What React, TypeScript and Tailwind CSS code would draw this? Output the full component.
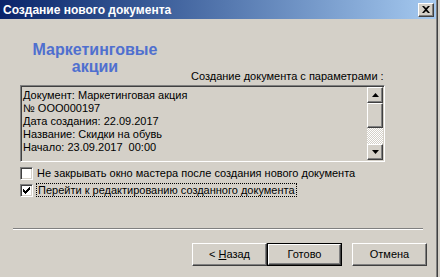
import React from "react";

const font = { fontFamily: '"Liberation Sans", Arial, sans-serif' };

function Raised({ className = "", children }: { className?: string; children?: React.ReactNode }) {
  return (
    <div
      className={
        "bg-[#d4d0c8] border border-t-white border-l-white border-b-[#404040] border-r-[#404040] shadow-[inset_-1px_-1px_0_#808080] " +
        className
      }
    >
      {children}
    </div>
  );
}

function Checkbox({ checked }: { checked?: boolean }) {
  return (
    <div className="w-[13px] h-[13px] bg-white border border-t-[#808080] border-l-[#808080] border-b-white border-r-white shadow-[inset_1px_1px_0_#404040,inset_-1px_-1px_0_#d4d0c8] flex items-center justify-center shrink-0">
      {checked && (
        <svg width="7" height="7" viewBox="0 0 7 7">
          <path d="M0 2h1v1h1v1h1V3h1V2h1V1h1V0h1v3H6v1H5v1H4v1H3v1H2V6H1V5H0z" fill="#000" />
        </svg>
      )}
    </div>
  );
}

export default function App() {
  return (
    <div className="w-[440px] h-[277px] bg-[#d4d0c8] flex overflow-hidden" style={font}>
      <div className="w-[436px] h-full flex flex-col">
        {/* title bar */}
        <div className="h-[19px] bg-gradient-to-r from-[#0a246a] to-[#a6caf0] flex items-center justify-between pl-[3px] pr-[2px]">
          <span className="text-white font-bold text-[12px] leading-none">Создание нового документа</span>
          <Raised className="w-[16px] h-[14px] flex items-center justify-center">
            <svg width="8" height="7" viewBox="0 0 8 7">
              <path d="M0 0h2l2 2 2-2h2L5 3.5 8 7H6L4 5 2 7H0l3-3.5z" fill="#000" />
            </svg>
          </Raised>
        </div>

        {/* body */}
        <div className="flex flex-col px-[20px]">
          <div className="flex">
            <div className="w-[150px] pt-[22px] text-center text-[#4f6fcf] font-bold text-[16px] leading-[17px]">
              Маркетинговые
              <br />
              акции
            </div>
            <div className="ml-[21px] pt-[50px] text-[11px] leading-[14px] text-black">
              Создание документа с параметрами :
            </div>
          </div>

          {/* text box */}
          <div className="mt-[2px] w-[365px] h-[77px] border border-t-[#808080] border-l-[#808080] border-b-white border-r-white shadow-[inset_1px_1px_0_#404040,inset_-1px_-1px_0_#d4d0c8] flex p-[1px]">
            <div className="flex-1 pl-[1px] pt-[2px] text-[11px] leading-[13px] text-black">
              <div>Документ: Маркетинговая акция</div>
              <div>№ ООО000197</div>
              <div>Дата создания: 22.09.2017</div>
              <div>Название: Скидки на обувь</div>
              <div>Начало: 23.09.2017&nbsp;&nbsp;00:00</div>
            </div>
            <div className="w-[16px] flex flex-col">
              <Raised className="h-[16px] flex items-center justify-center">
                <svg width="7" height="4" viewBox="0 0 7 4">
                  <path d="M3.5 0L7 4H0z" fill="#000" />
                </svg>
              </Raised>
              <Raised className="h-[25px]" />
              <div className="flex-1 bg-[repeating-conic-gradient(#ffffff_0_25%,#d4d0c8_0_50%)] bg-[length:2px_2px]" />
              <Raised className="h-[16px] flex items-center justify-center">
                <svg width="7" height="4" viewBox="0 0 7 4">
                  <path d="M0 0h7L3.5 4z" fill="#000" />
                </svg>
              </Raised>
            </div>
          </div>

          {/* checkboxes */}
          <div className="mt-[4px] flex items-center h-[14px]">
            <Checkbox />
            <span className="ml-[4px] text-[11px] leading-[13px] text-black">
              Не закрывать окно мастера после создания нового документа
            </span>
          </div>
          <div className="mt-[3px] flex items-center h-[14px]">
            <Checkbox checked />
            <span className="ml-[3px] text-[11px] leading-[12px] text-black border border-dotted border-black px-[1px]">
              Перейти к редактированию созданного документа
            </span>
          </div>
        </div>

        {/* separator */}
        <div className="mt-[31px] mx-[13px] h-[2px] border-t border-t-[#808080] border-b border-b-white" />

        {/* buttons */}
        <div className="mt-[13px] flex justify-end pr-[9px] text-[11px] text-black">
          <Raised className="w-[75px] h-[23px] flex items-center justify-center">
            <span>
              &lt; <span className="underline">Н</span>азад
            </span>
          </Raised>
          <div className="w-[75px] h-[23px] border border-black">
            <Raised className="w-full h-full flex items-center justify-center">Готово</Raised>
          </div>
          <Raised className="ml-[10px] w-[75px] h-[23px] flex items-center justify-center">Отмена</Raised>
        </div>
      </div>
      <div className="w-[1px] h-full bg-[#808080]" />
      <div className="w-[1px] h-full bg-[#404040]" />
      <div className="w-[2px] h-full bg-[#d4d0c8]" />
    </div>
  );
}
